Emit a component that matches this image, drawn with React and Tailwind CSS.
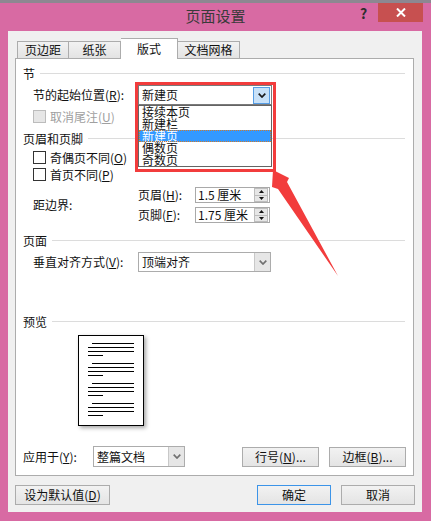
import React from "react";

const font = "font-['Noto_Sans_CJK_SC','Noto_Sans',sans-serif]";

const Chevron = ({ color = "#1a1a1a" }) => (
  <svg width="8" height="5" viewBox="0 0 8 5">
    <path d="M0.7 0.7 L4 4 L7.3 0.7" fill="none" stroke={color} strokeWidth="1.7" />
  </svg>
);

const Check = ({ disabled }) => (
  <span
    className={`w-[13px] h-[13px] border shrink-0 ${
      disabled ? "border-[#bcbcbc] bg-[#e6e6e6]" : "border-[#333333] bg-white"
    }`}
  />
);

const Header = ({ title, mt }) => (
  <div className={`${mt} h-[13px] flex items-center pl-[7px] pr-[8px]`}>
    <span className="text-[12px] leading-none">{title}</span>
    <div className="flex-1 ml-[5px] h-px bg-[#dcdcdc]" />
  </div>
);

const Btn = ({ children, w, focus }) => (
  <div
    className={`${w} h-[20px] flex items-center justify-center text-[12px] leading-none border bg-gradient-to-b from-[#f2f2f2] to-[#e4e4e4] ${
      focus ? "border-[#3c94e8]" : "border-[#acacac]"
    }`}
  >
    {children}
  </div>
);

const Spin = ({ value }) => (
  <div className="w-[75px] h-[16px] border border-[#a9a9a9] bg-white flex items-center">
    <span className="flex-1 pl-[2px] text-[12px] leading-none">{value}</span>
    <div className="w-[14px] h-[14px] mr-px flex flex-col">
      <div className="flex-1 flex items-center justify-center bg-[#e6e6e6] border border-[#bdbdbd]">
        <svg width="5" height="3" viewBox="0 0 5 3"><path d="M2.5 0 L5 3 L0 3 Z" fill="#111" /></svg>
      </div>
      <div className="flex-1 flex items-center justify-center bg-[#e6e6e6] border border-t-0 border-[#bdbdbd]">
        <svg width="5" height="3" viewBox="0 0 5 3"><path d="M0 0 L5 0 L2.5 3 Z" fill="#111" /></svg>
      </div>
    </div>
  </div>
);

const options = ["接续本页", "新建栏", "新建页", "偶数页", "奇数页"];

export default function App() {
  return (
    <div className={`w-[431px] h-[521px] bg-[#d86aa3] relative overflow-hidden flex flex-col text-[#111] ${font}`}>
      {/* desktop strip */}
      <div className="h-[3px] bg-[#8d8791] shrink-0" />

      {/* title bar */}
      <div className="h-[28px] flex shrink-0">
        <div className="w-[76px]" />
        <div className="flex-1 flex justify-center pt-[4px] text-[15px] leading-[17px] text-[#3a3a3a]">
          页面设置
        </div>
        <div className="w-[76px] flex items-start">
          <span className="mt-[2px] ml-[5px] w-[8px] text-[14px] font-bold leading-[16px] text-[#2e2e2e]">?</span>
          <div className="ml-[10px] w-[45px] h-[19px] bg-[#c75050] flex items-center justify-center">
            <svg width="10" height="9" viewBox="0 0 10 9">
              <path d="M1 0.5 L9 8.5 M9 0.5 L1 8.5" stroke="#fff" strokeWidth="2" />
            </svg>
          </div>
        </div>
      </div>

      {/* client area */}
      <div className="ml-[8px] w-[414px] h-[481px] bg-[#f0f0f0] pt-[7px] pl-[7px] flex flex-col">
        {/* tabs */}
        <div className="relative z-10 ml-[2px] h-[20px] flex items-end text-[12px] leading-none">
          <div className="w-[52px] h-[17px] border border-b-0 border-[#acacac] bg-gradient-to-b from-[#f2f2f2] to-[#e3e3e3] flex items-center justify-center">
            页边距
          </div>
          <div className="w-[52px] h-[17px] border border-l-0 border-b-0 border-[#acacac] bg-gradient-to-b from-[#f2f2f2] to-[#e3e3e3] flex items-center justify-center">
            纸张
          </div>
          <div className="w-[57px] h-[21px] -mb-px border border-l-0 border-b-0 border-[#acacac] bg-white flex items-center justify-center">
            版式
          </div>
          <div className="w-[62px] h-[17px] border border-l-0 border-b-0 border-[#acacac] bg-gradient-to-b from-[#f2f2f2] to-[#e3e3e3] flex items-center justify-center">
            文档网格
          </div>
        </div>

        {/* panel */}
        <div className="w-[399px] h-[418px] border border-[#acacac] bg-white flex flex-col text-[12px] leading-none">
          <Header title="节" mt="mt-[8px]" />

          {/* section start */}
          <div className="mt-[5px] h-[20px] flex items-center pl-[17px]">
            <span className="w-[105px]">
              节的起始位置(<u>R</u>):
            </span>
            <div className="relative z-20 w-[134px] h-[20px]">
              <div className="w-full h-full border border-[#7a7a7a] bg-white flex items-center pl-[3px]">
                <span className="flex-1">新建页</span>
                <div className="w-[17px] h-[17px] mr-px border border-[#569de5] bg-[#c8e1f8] flex items-center justify-center">
                  <Chevron />
                </div>
              </div>
              {/* dropdown list */}
              <div className="absolute left-0 top-[20px] w-[134px] h-[62px] border border-[#646464] bg-white flex flex-col">
                {options.map((o, i) => (
                  <div
                    key={o}
                    className={`h-[12px] pl-[3px] text-[12px] leading-[12px] ${
                      i === 2 ? "bg-[#3399ff] text-white outline-1 outline-dotted outline-[#d07a2a] -outline-offset-1" : ""
                    }`}
                  >
                    {o}
                  </div>
                ))}
              </div>
              {/* annotation box */}
              <div className="absolute left-[-3px] top-[-3px] w-[141px] h-[90px] border-[3px] border-[#f23c3c]" />
            </div>
          </div>

          <div className="mt-[5px] h-[13px] flex items-center pl-[17px] text-[#a0a0a0]">
            <Check disabled />
            <span className="ml-[4px]">取消尾注(<u>U</u>)</span>
          </div>

          <Header title="页眉和页脚" mt="mt-[9px]" />

          <div className="mt-[6px] h-[13px] flex items-center pl-[17px]">
            <Check />
            <span className="ml-[4px]">奇偶页不同(<u>O</u>)</span>
          </div>
          <div className="mt-[4px] h-[13px] flex items-center pl-[17px]">
            <Check />
            <span className="ml-[4px]">首页不同(<u>P</u>)</span>
          </div>

          {/* margins from edge */}
          <div className="mt-[6px] h-[36px] flex items-center pl-[17px]">
            <span className="w-[105px]">距边界:</span>
            <div className="flex flex-col gap-[4px]">
              <div className="flex items-center">
                <span className="w-[57px]">页眉(<u>H</u>):</span>
                <Spin value="1.5 厘米" />
              </div>
              <div className="flex items-center">
                <span className="w-[57px]">页脚(<u>F</u>):</span>
                <Spin value="1.75 厘米" />
              </div>
            </div>
          </div>

          <Header title="页面" mt="mt-[11px]" />

          <div className="mt-[5px] h-[20px] flex items-center pl-[17px]">
            <span className="w-[105px]">垂直对齐方式(<u>V</u>):</span>
            <div className="w-[133px] h-[20px] border border-[#acacac] bg-white flex items-center pl-[3px]">
              <span className="flex-1">顶端对齐</span>
              <div className="w-[16px] h-[18px] bg-[#e6e6e6] border-l border-[#c8c8c8] flex items-center justify-center">
                <Chevron color="#707070" />
              </div>
            </div>
          </div>

          <Header title="预览" mt="mt-[43px]" />

          {/* preview page */}
          <div className="mt-[7px] ml-[62px] w-[66px] h-[91px] border border-black bg-white shadow-[2px_2px_4px_rgba(0,0,0,0.35)]">
            <svg width="64" height="89" viewBox="0 0 64 89">
              {[0, 20, 40, 60].map((g) => (
                <g key={g} stroke="#000" strokeWidth="1">
                  <line x1="13" x2="55" y1={7.5 + g} y2={7.5 + g} />
                  <line x1="9" x2="55" y1={11.5 + g} y2={11.5 + g} />
                  <line x1="9" x2="55" y1={15.5 + g} y2={15.5 + g} />
                  <line x1="9" x2="24" y1={19.5 + g} y2={19.5 + g} />
                </g>
              ))}
            </svg>
          </div>

          {/* apply to */}
          <div className="mt-[20px] h-[21px] flex items-center pl-[7px] pr-[7px]">
            <span className="w-[70px]">应用于(<u>Y</u>):</span>
            <div className="w-[92px] h-[21px] border border-[#acacac] bg-white flex items-center pl-[3px]">
              <span className="flex-1">整篇文档</span>
              <div className="w-[16px] h-[19px] bg-[#e6e6e6] border-l border-[#c8c8c8] flex items-center justify-center">
                <Chevron color="#707070" />
              </div>
            </div>
            <div className="ml-auto flex gap-[10px]">
              <Btn w="w-[77px]">行号(<u>N</u>)...</Btn>
              <Btn w="w-[77px]">边框(<u>B</u>)...</Btn>
            </div>
          </div>
        </div>

        {/* bottom buttons */}
        <div className="mt-[9px] w-[400px] flex">
          <Btn w="w-[95px]">设为默认值(<u>D</u>)</Btn>
          <div className="ml-auto flex gap-[10px]">
            <Btn w="w-[74px]" focus>确定</Btn>
            <Btn w="w-[74px]">取消</Btn>
          </div>
        </div>
      </div>

      {/* red annotation arrow */}
      <svg className="absolute left-0 top-0 pointer-events-none" width="431" height="521" viewBox="0 0 431 521">
        <polygon points="273,170 289,178 287,182 338,276 278,189 272,187" fill="#f23c3c" />
      </svg>
    </div>
  );
}
